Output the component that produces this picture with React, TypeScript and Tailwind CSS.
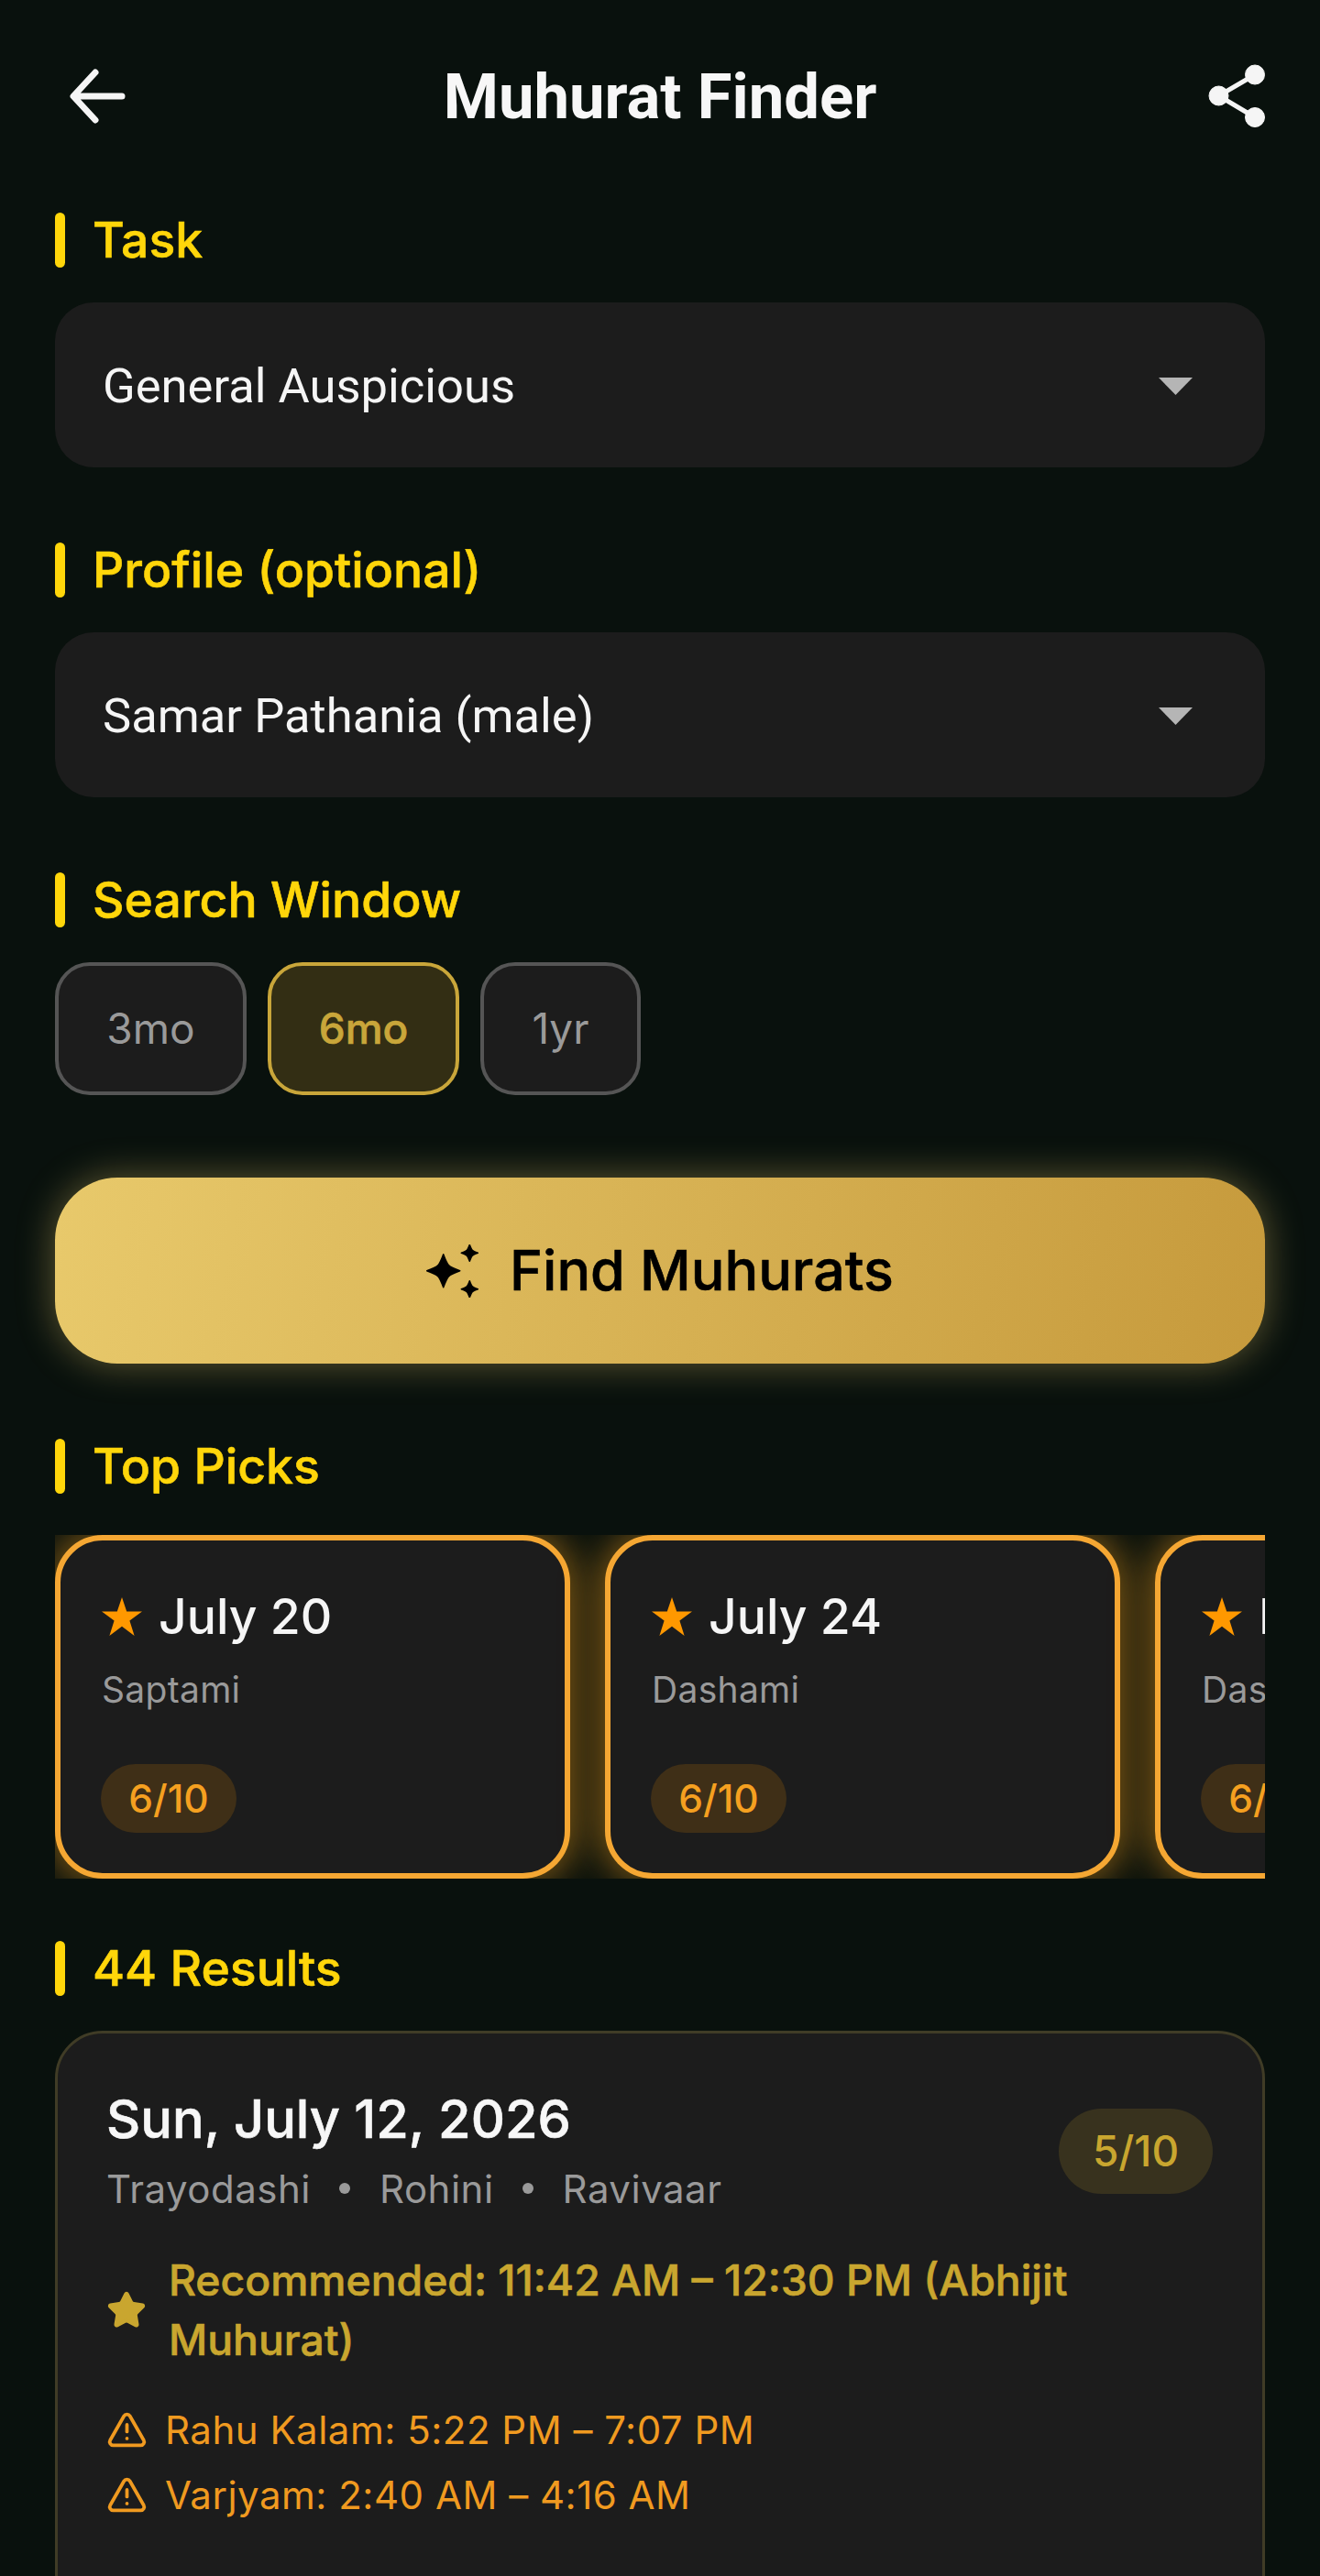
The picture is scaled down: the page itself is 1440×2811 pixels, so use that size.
import { Star, TriangleAlert } from "lucide-react";

const inter = "font-['Inter',sans-serif]";
// Inter here only has static weights, the reference sits between medium and semibold
const heavier = "font-medium [-webkit-text-stroke:0.6px_currentColor]";

const picks = [
  { date: "July 20", tithi: "Saptami" },
  { date: "July 24", tithi: "Dashami" },
  { date: "December 3", tithi: "Dashami" },
];

function sparkle(cx: number, cy: number, r: number) {
  const k = 0.27 * r;
  return `M${cx} ${cy - r}C${cx + k} ${cy - k} ${cx + k} ${cy - k} ${cx + r} ${cy}C${cx + k} ${cy + k} ${cx + k} ${cy + k} ${cx} ${cy + r}C${cx - k} ${cy + k} ${cx - k} ${cy + k} ${cx - r} ${cy}C${cx - k} ${cy - k} ${cx - k} ${cy - k} ${cx} ${cy - r}Z`;
}

function SectionLabel({ children, className }: { children: string; className?: string }) {
  return (
    <div className={`flex h-[60px] items-center gap-[30px] ${className ?? ""}`}>
      <span className="h-[60px] w-[11px] rounded-full bg-[#ffd60a]" />
      <span className={`text-[53.5px] leading-none text-[#ffd60a] ${heavier}`}>{children}</span>
    </div>
  );
}

function Dropdown({ value }: { value: string }) {
  return (
    <div className="mt-[38px] flex h-[180px] items-center justify-between rounded-[42px] bg-[#1c1c1c] pr-[79px] pl-[52px]">
      <span className="pt-[2px] font-['Roboto',sans-serif] text-[52.5px] text-[#f5f5f5]">{value}</span>
      <svg width="37" height="19" viewBox="0 0 37 19" className="mt-[3px] fill-[#b5b5b5]">
        <path d="M0 0H37L18.5 19Z" />
      </svg>
    </div>
  );
}

function Chip({ label, active, width }: { label: string; active?: boolean; width: string }) {
  return (
    <div
      className={`flex h-[145px] items-center justify-center rounded-[38px] border-4 text-[46px] ${width} ${
        active ? `border-[#c9a63a] bg-[#332e14] text-[#c9a63a] ${heavier}` : "border-[#555555] bg-[#1c1c1c] text-[#9a9a9a]"
      }`}
    >
      {label}
    </div>
  );
}

function PickCard({ date, tithi }: { date: string; tithi: string }) {
  return (
    <div className="h-[375px] w-[562px] shrink-0 rounded-[52px] border-[6px] border-[#f5a733] bg-[#1c1c1c] pt-[57px] pl-[45px] whitespace-nowrap shadow-[0_0_40px_4px_rgba(245,160,30,0.55)]">
      <div className="flex h-[52px] items-center gap-[18px]">
        <svg width="44" height="42" viewBox="0 0 44 42" className="fill-[#ff9800]">
          <path d="M22 0L27.2 15.6H44L30.4 25.4L35.6 42L22 31.8L8.4 42L13.6 25.4L0 15.6H16.8Z" />
        </svg>
        <span className="text-[53.5px] leading-none font-medium text-[#f5f5f5]">{date}</span>
      </div>
      <div className="mt-[30px] text-[39px] leading-[48px] tracking-[0.3px] text-[#9a9a9a]">{tithi}</div>
      <div className="mt-[57px] -ml-[1px] flex h-[75px] w-[148px] items-center justify-center rounded-full bg-[#3f2f17] text-[42.5px] font-medium text-[#f5a020]">
        6/10
      </div>
    </div>
  );
}

function WarningRow({ text, className }: { text: string; className?: string }) {
  return (
    <div className={`flex h-[71px] items-center gap-[19px] text-[42px] tracking-[0.5px] text-[#f09a20] ${className ?? ""}`}>
      <TriangleAlert size={45} strokeWidth={2} className="shrink-0" />
      <span>{text}</span>
    </div>
  );
}

export default function App() {
  return (
    <div className={`h-[2811px] w-[1440px] overflow-hidden bg-[#09110d] px-[60px] ${inter}`}>
      <header className="flex h-[210px] items-center">
        <div className="flex-1">
          <svg width="62" height="60" viewBox="0 0 62 60" className="ml-[15px] fill-none stroke-[#f5f5f5] stroke-[7] [stroke-linecap:round] [stroke-linejoin:round]">
            <path d="M58 30H6M29 4L5 30L29 56" />
          </svg>
        </div>
        <h1 className="pt-[2px] font-['Roboto',sans-serif] text-[68.8px] font-bold text-[#f7f7f7]">Muhurat Finder</h1>
        <div className="flex flex-1 justify-end">
          <svg width="62" height="69" viewBox="0 0 62 69" className="-mt-[1px] fill-[#f5f5f5] stroke-[#f5f5f5]">
            <circle cx="51" cy="11.5" r="10.5" />
            <circle cx="11.5" cy="34.5" r="10.5" />
            <circle cx="51" cy="58" r="10.5" />
            <path d="M51 11.5L11.5 34.5L51 58" fill="none" strokeWidth="5" />
          </svg>
        </div>
      </header>

      <div className="pt-[22px]">
        <SectionLabel>Task</SectionLabel>
        <Dropdown value="General Auspicious" />
      </div>

      <div className="pt-[82px]">
        <SectionLabel>Profile (optional)</SectionLabel>
        <Dropdown value="Samar Pathania (male)" />
      </div>

      <div className="pt-[82px]">
        <SectionLabel>Search Window</SectionLabel>
        <div className="mt-[38px] flex gap-[23px]">
          <Chip label="3mo" width="w-[209px]" />
          <Chip label="6mo" width="w-[209px]" active />
          <Chip label="1yr" width="w-[175px]" />
        </div>
      </div>

      <button className={`mt-[90px] flex h-[203px] w-full items-center justify-center gap-[33px] rounded-[68px] bg-[linear-gradient(100deg,#e8c96b,#c69a3c)] text-[61px] text-black shadow-[0_0_40px_rgba(232,201,107,0.4)] ${heavier}`}>
        <svg width="58" height="58" viewBox="0 0 58 58" className="fill-black stroke-black stroke-[1.5] [stroke-linejoin:round]">
          <path d={sparkle(18.7, 28.7, 18)} />
          <path d={sparkle(47.3, 9.3, 9)} />
          <path d={sparkle(47.3, 48.7, 9)} />
        </svg>
        Find Muhurats
      </button>

      <SectionLabel className="mt-[82px]">Top Picks</SectionLabel>
      <div className="mt-[45px] flex h-[375px] gap-[38px] overflow-hidden">
        {picks.map((pick) => (
          <PickCard key={pick.date} {...pick} />
        ))}
      </div>

      <SectionLabel className="mt-[68px]">44 Results</SectionLabel>
      <div className="mt-[38px] h-[700px] rounded-[52px] border-[3px] border-[#403c26] bg-[#1c1c1c] pr-[55px] pl-[53px] pt-[59px]">
        <div className="flex items-center justify-between">
          <div>
            <div className={`text-[57.7px] leading-[68px] text-[#f7f7f7] ${heavier}`}>Sun, July 12, 2026</div>
            <div className="mt-[14px] flex h-[56px] items-center gap-[31.5px] text-[42px] tracking-[0.5px] text-[#9a9a9a]">
              <span>Trayodashi</span>
              <span className="h-[12px] w-[12px] rounded-full bg-[#9a9a9a]" />
              <span>Rohini</span>
              <span className="h-[12px] w-[12px] rounded-full bg-[#9a9a9a]" />
              <span>Ravivaar</span>
            </div>
          </div>
          <div className="-mr-[1px] flex h-[93px] w-[168px] items-center justify-center rounded-full bg-[#38321e] text-[46px] font-medium text-[#c9a62f]">
            5/10
          </div>
        </div>

        <div className="mt-[40px] flex items-center gap-[24px]">
          <Star size={44} fill="currentColor" strokeWidth={2} className="shrink-0 text-[#c9a62f]" />
          <p className={`w-[1000px] text-[46.3px] leading-[65px] text-[#c9a62f] ${heavier}`}>
            Recommended: 11:42 AM – 12:30 PM (Abhijit Muhurat)
          </p>
        </div>

        <WarningRow className="mt-[30px]" text="Rahu Kalam: 5:22 PM – 7:07 PM" />
        <WarningRow text="Varjyam: 2:40 AM – 4:16 AM" />
      </div>
    </div>
  );
}
